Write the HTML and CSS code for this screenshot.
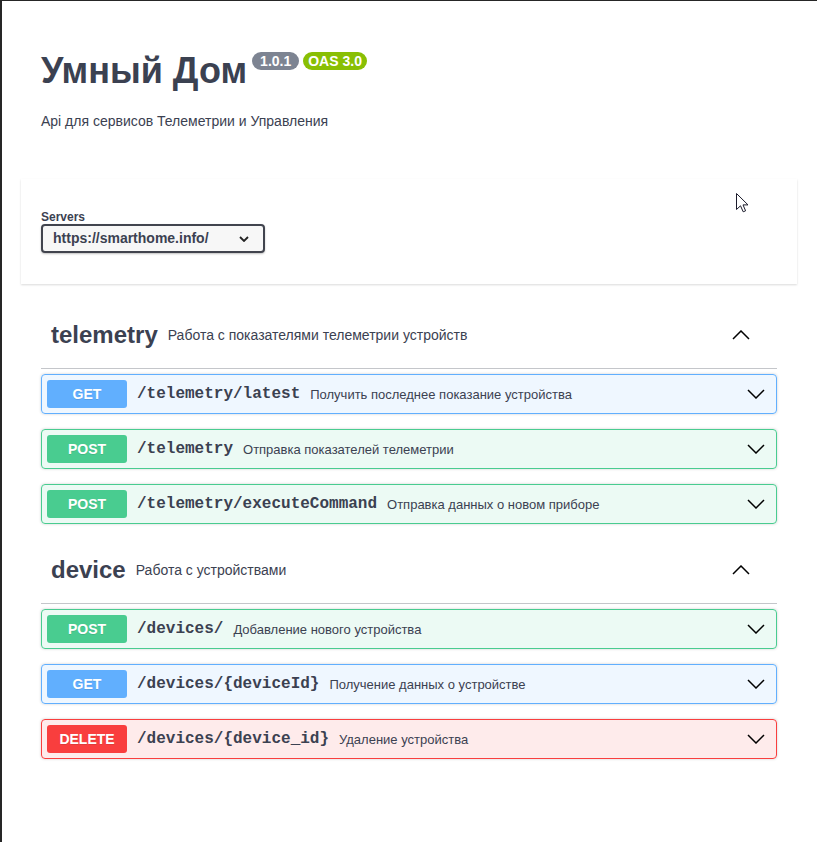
FILE: index.html
```html
<!DOCTYPE html>
<html lang="ru">
<head>
<meta charset="utf-8">
<title>Умный Дом</title>
<link rel="stylesheet" href="styles.css">
</head>
<body>
<div class="page">
  <div class="wrapper">
    <section class="info">
      <div class="title-row">
        <h2 class="title">Умный Дом</h2>
        <span class="badge badge-version">1.0.1</span>
        <span class="badge badge-oas">OAS 3.0</span>
      </div>
      <p class="info-desc">Api для сервисов Телеметрии и Управления</p>
    </section>

    <section class="schemes">
      <span class="servers-title">Servers</span>
      <div class="select">
        <span>https://smarthome.info/</span>
        <svg class="select-arrow" width="10" height="6" viewBox="0 0 10 6"><polyline points="1,1 5,5 9,1" fill="none" stroke="#222" stroke-width="1.8"/></svg>
      </div>
      <svg class="cursor" width="13" height="20" viewBox="0 0 13 20"><path d="M0.5,0.5 L0.5,16.5 L4.5,12.8 L7.2,18.8 L9.6,17.8 L7,11.9 L12,11.9 Z" fill="#fff" stroke="#1b1b2b" stroke-width="1" stroke-linejoin="miter"/></svg>
    </section>

    <div class="tags">
      <section class="tag-section">
        <h3 class="tag-head">
          <span class="tag-name">telemetry</span>
          <small class="tag-desc">Работа с показателями телеметрии устройств</small>
          <svg class="tag-arrow" width="18" height="10" viewBox="0 0 18 10"><polyline points="1,9 9,1 17,9" fill="none" stroke="#000" stroke-width="1.5"/></svg>
        </h3>
        <div class="ops">
          <div class="op op-get">
            <span class="method">GET</span>
            <span class="path">/telemetry/latest</span>
            <span class="desc">Получить последнее показание устройства</span>
            <svg class="op-arrow" width="18" height="10" viewBox="0 0 18 10"><polyline points="1,1 9,9 17,1" fill="none" stroke="#000" stroke-width="1.5"/></svg>
          </div>
          <div class="op op-post">
            <span class="method">POST</span>
            <span class="path">/telemetry</span>
            <span class="desc">Отправка показателей телеметрии</span>
            <svg class="op-arrow" width="18" height="10" viewBox="0 0 18 10"><polyline points="1,1 9,9 17,1" fill="none" stroke="#000" stroke-width="1.5"/></svg>
          </div>
          <div class="op op-post">
            <span class="method">POST</span>
            <span class="path">/telemetry/executeCommand</span>
            <span class="desc">Отправка данных о новом приборе</span>
            <svg class="op-arrow" width="18" height="10" viewBox="0 0 18 10"><polyline points="1,1 9,9 17,1" fill="none" stroke="#000" stroke-width="1.5"/></svg>
          </div>
        </div>
      </section>

      <section class="tag-section">
        <h3 class="tag-head">
          <span class="tag-name">device</span>
          <small class="tag-desc">Работа с устройствами</small>
          <svg class="tag-arrow" width="18" height="10" viewBox="0 0 18 10"><polyline points="1,9 9,1 17,9" fill="none" stroke="#000" stroke-width="1.5"/></svg>
        </h3>
        <div class="ops">
          <div class="op op-post">
            <span class="method">POST</span>
            <span class="path">/devices/</span>
            <span class="desc">Добавление нового устройства</span>
            <svg class="op-arrow" width="18" height="10" viewBox="0 0 18 10"><polyline points="1,1 9,9 17,1" fill="none" stroke="#000" stroke-width="1.5"/></svg>
          </div>
          <div class="op op-get">
            <span class="method">GET</span>
            <span class="path">/devices/{deviceId}</span>
            <span class="desc">Получение данных о устройстве</span>
            <svg class="op-arrow" width="18" height="10" viewBox="0 0 18 10"><polyline points="1,1 9,9 17,1" fill="none" stroke="#000" stroke-width="1.5"/></svg>
          </div>
          <div class="op op-delete">
            <span class="method">DELETE</span>
            <span class="path">/devices/{device_id}</span>
            <span class="desc">Удаление устройства</span>
            <svg class="op-arrow" width="18" height="10" viewBox="0 0 18 10"><polyline points="1,1 9,9 17,1" fill="none" stroke="#000" stroke-width="1.5"/></svg>
          </div>
        </div>
      </section>
    </div>
  </div>
</div>
</body>
</html>
```

FILE: styles.css
```css
* { box-sizing: border-box; }

html, body {
  margin: 0;
  padding: 0;
  background: #fff;
}

.page {
  min-height: 100vh;
  border-top: 1px solid #262626;
  border-left: 2px solid #262626;
  font-family: "Liberation Sans", Arial, sans-serif;
  color: #3b4151;
}

.wrapper {
  padding: 0 20px 0 19px;
}

/* ---------- info ---------- */
.info {
  margin-top: 49px;
  padding: 0 20px;
}

.title-row {
  display: flex;
  align-items: flex-start;
}

.title {
  margin: 0;
  font-family: "Liberation Sans", Arial, sans-serif;
  font-weight: 700;
  font-size: 36px;
  line-height: 42px;
  color: #3b4151;
}

.badge {
  display: inline-block;
  margin-top: 2px;
  height: 18px;
  line-height: 18px;
  border-radius: 57px;
  color: #fff;
  font-family: "Liberation Sans", Arial, sans-serif;
  font-weight: 700;
  font-size: 14px;
}

.badge-version {
  margin-left: 5px;
  padding: 0 8px;
  background: #7d8492;
}

.badge-oas {
  margin-left: 4px;
  padding: 0 5px;
  background: #89bf04;
}

.info-desc {
  margin: 19px 0 0;
  font-family: "Liberation Sans", Arial, sans-serif;
  font-size: 14px;
  line-height: 20px;
  color: #3b4151;
}

/* ---------- servers ---------- */
.schemes {
  position: relative;
  margin-top: 48px;
  margin-bottom: 18px;
  padding: 31px 20px;
  background: #fff;
  box-shadow: 0 1px 2px 0 rgba(0, 0, 0, .15);
}

.servers-title {
  display: block;
  font-weight: 700;
  font-size: 12px;
  line-height: 14px;
  color: #3b4151;
}

.select {
  display: flex;
  align-items: center;
  justify-content: space-between;
  width: 224px;
  height: 29px;
  padding: 0 14px 0 10px;
  border: 2px solid #41444e;
  border-radius: 4px;
  background: #f7f7f7;
  box-shadow: 0 1px 2px 0 rgba(0, 0, 0, .25);
  font-weight: 700;
  font-size: 14px;
  line-height: 25px;
  color: #3b4151;
}

.select-arrow { display: block; }

.cursor {
  position: absolute;
  left: 715px;
  top: 14px;
}

/* ---------- tags ---------- */
.tags {
  padding: 0 20px;
}

.tag-section + .tag-section {
  margin-top: 13px;
}

.tag-head {
  display: flex;
  align-items: center;
  height: 67px;
  margin: 0;
  padding: 10px 20px 10px 10px;
  border-bottom: 1px solid rgba(59, 65, 81, .3);
  font-weight: 400;
}

.tag-name {
  font-family: "Liberation Sans", Arial, sans-serif;
  font-weight: 700;
  font-size: 24px;
  line-height: 28px;
  color: #3b4151;
}

.tag-desc {
  flex: 1;
  padding: 0 10px;
  font-family: "Liberation Sans", Arial, sans-serif;
  font-size: 14px;
  line-height: 19px;
  color: #3b4151;
}

.tag-arrow {
  display: block;
  margin-right: 7px;
  margin-top: -1px;
}

.ops {
  display: flex;
  flex-direction: column;
  gap: 15px;
  margin-top: 5px;
}

.op {
  display: flex;
  align-items: center;
  height: 40px;
  padding: 5px;
  border: 1px solid;
  border-radius: 4px;
  box-shadow: 0 0 3px rgba(0, 0, 0, .19);
}

.method {
  min-width: 80px;
  padding: 6px 0;
  border-radius: 3px;
  text-align: center;
  font-family: "Liberation Sans", Arial, sans-serif;
  font-weight: 700;
  font-size: 14px;
  line-height: 16px;
  color: #fff;
  text-shadow: 0 1px 0 rgba(0, 0, 0, .1);
}

.path {
  padding: 0 10px;
  font-family: "Liberation Mono", "Courier New", monospace;
  font-weight: 600;
  font-size: 16px;
  line-height: 18px;
  color: #3b4151;
}

.desc {
  flex: 1;
  font-family: "Liberation Sans", Arial, sans-serif;
  font-size: 13px;
  line-height: 18px;
  padding-top: 1px;
  color: #3b4151;
}

.op-arrow {
  display: block;
  margin-right: 6px;
}

.op-get {
  background: rgba(97, 175, 254, .1);
  border-color: #61affe;
}
.op-get .method { background: #61affe; }

.op-post {
  background: rgba(73, 204, 144, .1);
  border-color: #49cc90;
}
.op-post .method { background: #49cc90; }

.op-delete {
  background: rgba(249, 62, 62, .1);
  border-color: #f93e3e;
}
.op-delete .method { background: #f93e3e; }
```
